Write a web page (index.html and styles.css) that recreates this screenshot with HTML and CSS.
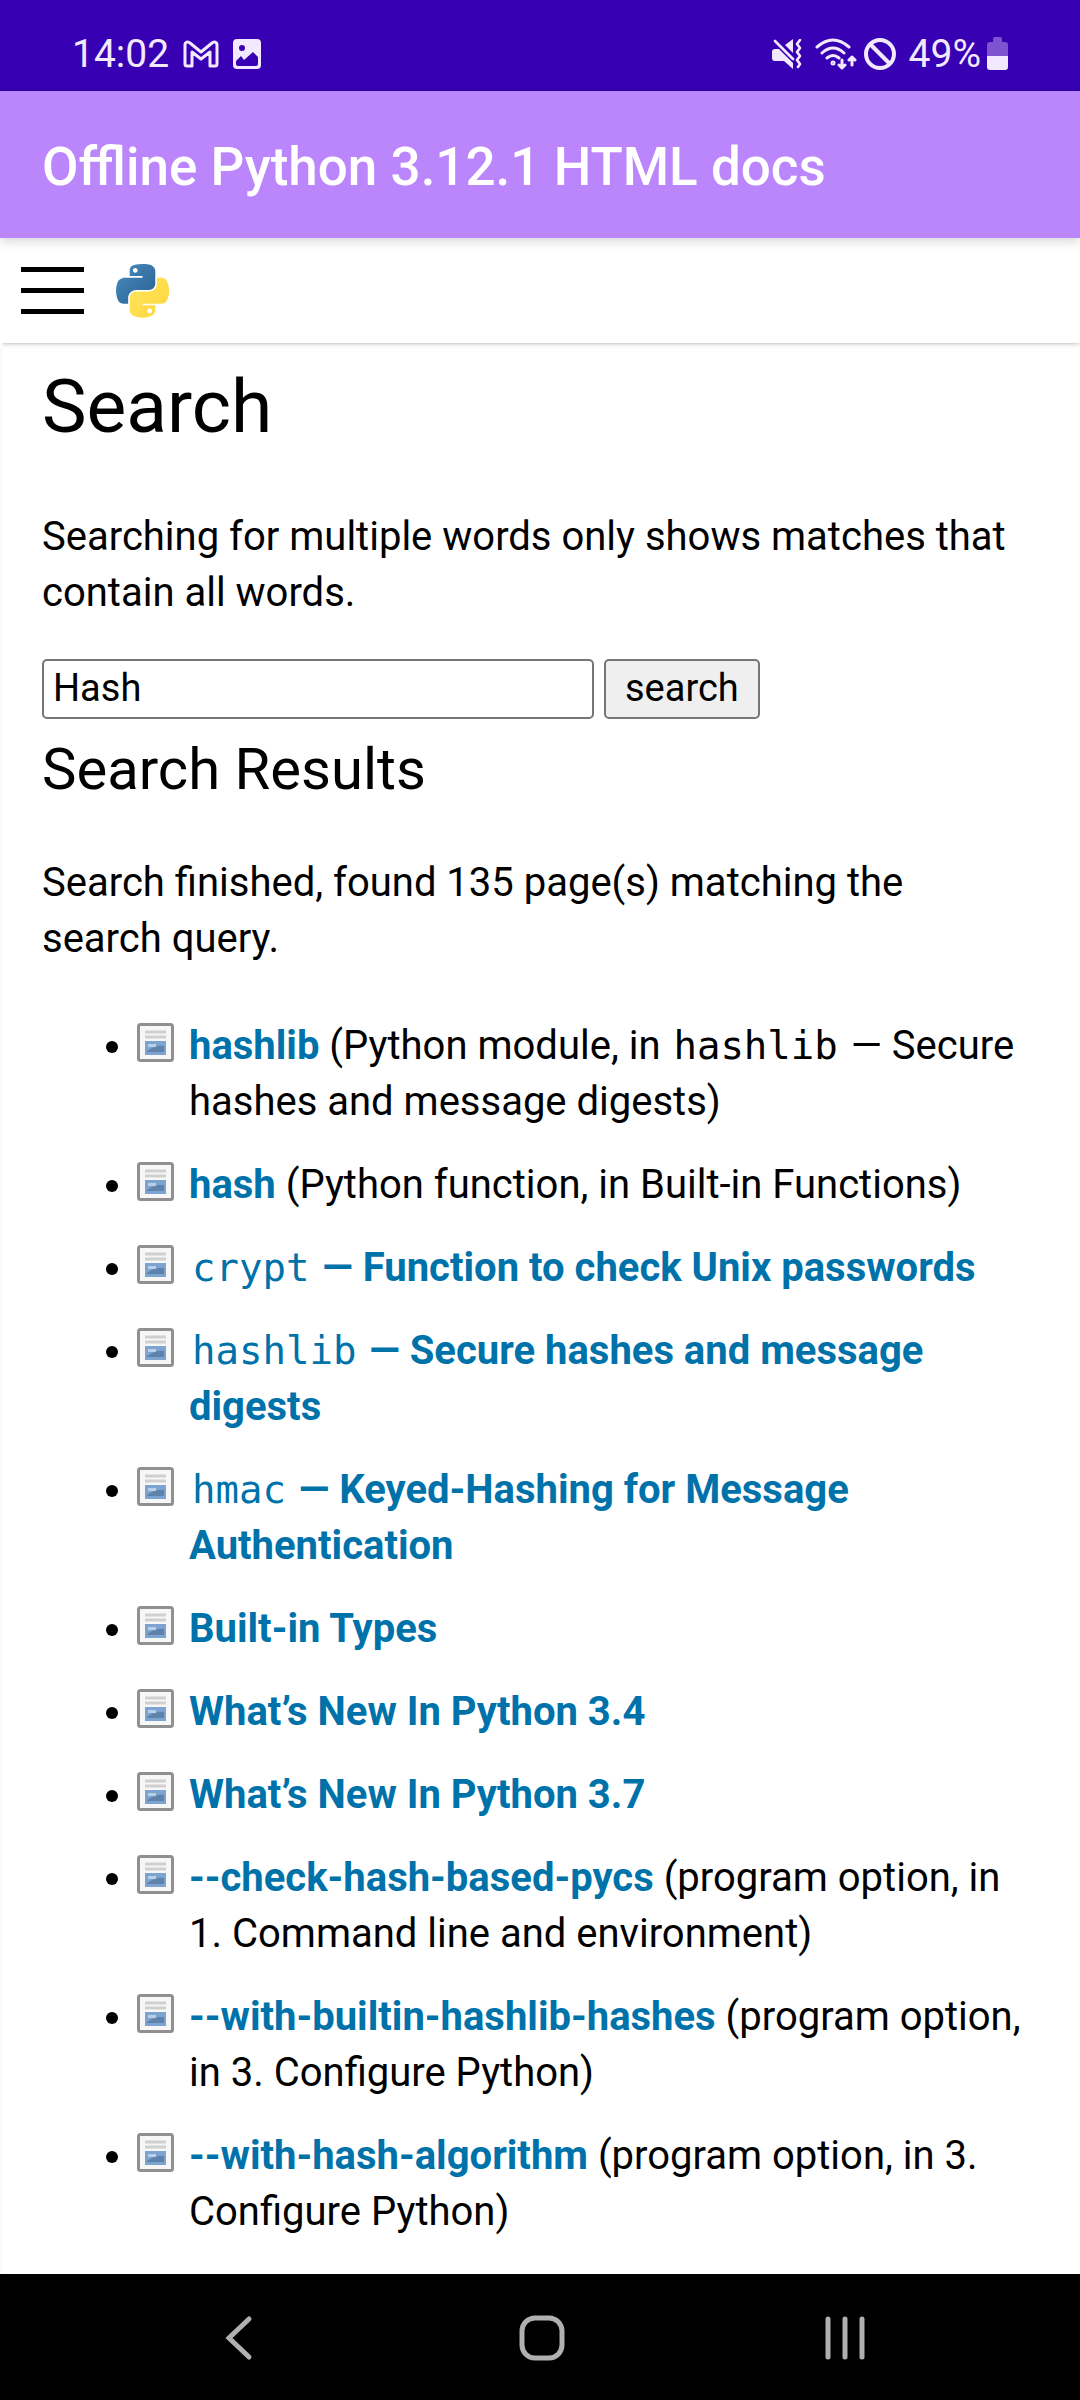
FILE: index.html
```html
<!DOCTYPE html>
<html lang="en">
<head>
    <meta charset="UTF-8">
    <meta name="viewport" content="width=device-width, initial-scale=1.0">
    <title>Search - Offline Python 3.12.1 HTML docs</title>
    <link rel="stylesheet" href="styles.css">
</head>
<body>
    <div class="status-bar">
        <div class="status-left">
            <span>14:02</span>
            <svg class="gmail" width="36" height="28" viewBox="0 0 36 28" fill="none" stroke="#f3e9ff" stroke-width="3" stroke-linejoin="round">
                <path d="M2 5v19q0 2 2 2h5V12l9 7 9-7v14h5q2 0 2-2V5c0-3-3-4-5-2l-11 9L7 3C5 1 2 2 2 5z"/>
            </svg>
            <svg width="28" height="30" viewBox="0 0 28 30">
                <path fill="#f3e9ff" fill-rule="evenodd" d="M4 0h20q4 0 4 4v22q0 4-4 4H4q-4 0-4-4V4q0-4 4-4zM3 22v3q0 2 2 2h18q2 0 2-2v-7l-5-5-9 8-3-4zM9 6a3 3 0 1 0 0 6 3 3 0 0 0 0-6z"/>
            </svg>
        </div>
        <div class="status-right">
            <svg width="30" height="30" viewBox="0 0 30 30" fill="#f3e9ff" stroke="#f3e9ff">
                <path stroke="none" d="M0 13q0-3 3-3h4l14 14v6l-9-8H3q-3 0-3-3zM13 6l8-6v14z"/>
                <path fill="none" stroke-width="2.6" stroke-linecap="round" stroke-linejoin="round" d="M3 2l18 18M28 1l-3 4 3 4-3 4 3 4-3 4 3 4-2 3"/>
            </svg>
            <svg class="wifi" width="42" height="32" viewBox="0 0 42 32" fill="none" stroke="#f3e9ff" stroke-width="3" stroke-linecap="round" stroke-linejoin="round">
                <path d="M2 9q16-14 32 0M7 15q11-10 22 0M12 20q6-5 12 0M27 22v8m-3-3l3 3 3-3M37 27v-8m-3 3l3-3 3 3"/>
                <circle cx="18" cy="25" r="1"/>
            </svg>
            <svg class="blocked" width="34" height="34" viewBox="0 0 34 34" fill="none" stroke="#f3e9ff" stroke-width="4">
                <circle cx="17" cy="17" r="14"/>
                <path d="M7 7l20 20"/>
            </svg>
            <span>49%</span>
            <svg class="battery" width="21" height="33" viewBox="0 0 21 33">
                <path fill="#7f52cf" d="M0 19V8q0-3 3-3h3V2q0-2 2-2h5q2 0 2 2v3h3q3 0 3 3v11z"/>
                <path fill="#f3e9ff" d="M0 19h21v11q0 3-3 3H3q-3 0-3-3z"/>
            </svg>
        </div>
    </div>

    <header class="app-bar">
        <span class="app-title">Offline Python 3.12.1 HTML docs</span>
    </header>

    <nav class="top-nav">
        <button type="button" class="menu-button" aria-label="Menu">
            <span></span>
            <span></span>
            <span></span>
        </button>
        <a href="#" class="logo" aria-label="Python">
            <svg width="53" height="54" viewBox="0 0 111 113">
                <defs>
                    <linearGradient id="blue" x1="0" y1="0" x2="1" y2="1">
                        <stop offset="0" stop-color="#4a8cc0"/>
                        <stop offset="1" stop-color="#28608f"/>
                    </linearGradient>
                    <linearGradient id="yellow" x1="1" y1="1" x2="0.3" y2="0.3">
                        <stop offset="0" stop-color="#ffd43b"/>
                        <stop offset="1" stop-color="#ffe155"/>
                    </linearGradient>
                </defs>
                <path fill="url(#blue)" d="M54.9 0c-4.6 0-9 .4-12.8 1.1C30.8 3.1 28.7 7.3 28.7 15v10.2h26.8v3.4H18.6c-7.8 0-14.6 4.7-16.7 13.6-2.5 10.2-2.6 16.6 0 27.3 1.9 7.9 6.4 13.6 14.2 13.6h9.3V70.8c0-8.8 7.6-16.6 16.7-16.6h26.8c7.4 0 13.4-6.1 13.4-13.6V15c0-7.3-6.1-12.7-13.4-13.9C64.3.3 59.5 0 54.9 0zM40.4 8.2c2.8 0 5 2.3 5 5.1s-2.2 5.1-5 5.1-5-2.3-5-5.1 2.2-5.1 5-5.1z"/>
                <path fill="url(#yellow)" d="M85.6 28.7v11.9c0 9.2-7.8 17-16.7 17H42.1c-7.3 0-13.4 6.3-13.4 13.6v25.5c0 7.3 6.3 11.5 13.4 13.6 8.5 2.5 16.6 2.9 26.8 0 6.7-2 13.4-5.9 13.4-13.6V86.5H55.5v-3.4h40.2c7.8 0 10.7-5.4 13.4-13.6 2.8-8.4 2.7-16.5 0-27.3-1.9-7.7-5.6-13.5-13.4-13.5zM70.6 93.3c2.8 0 5 2.3 5 5.1s-2.2 5.1-5 5.1-5-2.3-5-5.1 2.2-5.1 5-5.1z"/>
            </svg>
        </a>
    </nav>

    <main class="content">
        <h1>Search</h1>
        <p class="hint">Searching for multiple words only shows matches that contain all words.</p>
        <form class="search-form">
            <input type="text" name="q" value="Hash" aria-label="Search">
            <button type="submit">search</button>
        </form>
        <h2>Search Results</h2>
        <p class="summary">Search finished, found 135 page(s) matching the search query.</p>
        <ul class="results">
            <li><a href="#">hashlib</a> (Python module, in <code>hashlib</code> — Secure hashes and message digests)</li>
            <li><a href="#">hash</a> (Python function, in Built-in Functions)</li>
            <li><a href="#"><code>crypt</code> — Function to check Unix passwords</a></li>
            <li><a href="#"><code>hashlib</code> — Secure hashes and message digests</a></li>
            <li><a href="#"><code>hmac</code> — Keyed-Hashing for Message Authentication</a></li>
            <li><a href="#">Built-in Types</a></li>
            <li><a href="#">What’s New In Python 3.4</a></li>
            <li><a href="#">What’s New In Python 3.7</a></li>
            <li><a href="#">--check-hash-based-pycs</a> (program option, in 1. Command line and environment)</li>
            <li><a href="#">--with-builtin-hashlib-hashes</a> (program option, in 3. Configure Python)</li>
            <li><a href="#">--with-hash-algorithm</a> (program option, in 3. Configure Python)</li>
        </ul>
    </main>

    <footer class="system-nav">
        <button type="button" aria-label="Back">
            <svg width="48" height="48" viewBox="0 0 48 48"><path d="M34 5L14 24l20 19"/></svg>
        </button>
        <button type="button" aria-label="Home">
            <svg width="48" height="48" viewBox="0 0 48 48"><rect x="4" y="4" width="40" height="40" rx="13"/></svg>
        </button>
        <button type="button" aria-label="Recents">
            <svg width="48" height="48" viewBox="0 0 48 48"><path d="M7 5v38M24 5v38M41 5v38"/></svg>
        </button>
    </footer>
</body>
</html>
```
FILE: styles.css
```css
* {
    box-sizing: border-box;
}

body {
    margin: 0;
    min-height: 100vh;
    display: flex;
    flex-direction: column;
    font-family: Roboto, 'Liberation Sans', sans-serif;
    font-size: 40px;
    line-height: 56px;
    color: #000;
    background: #fff;
}

button {
    font: inherit;
    color: inherit;
    cursor: pointer;
}

/* android status bar */
.status-bar {
    display: flex;
    justify-content: space-between;
    align-items: center;
    height: 91px;
    padding: 16px 72px 0;
    background: #3700b3;
    color: #f3e9ff;
    font-size: 39px;
}

.status-left,
.status-right {
    display: flex;
    align-items: center;
}

.gmail {
    margin: 0 14px;
}

.wifi {
    margin-left: 13px;
}

.blocked {
    margin: 0 12px 0 6px;
}

.battery {
    margin-left: 6px;
}

.app-bar {
    position: relative;
    z-index: 1;
    padding: 46px 42px 41px;
    background: #bb86fc;
    box-shadow: 0 2px 12px rgba(0, 0, 0, 0.2);
}

.app-title {
    display: block;
    color: #fff;
    font-size: 53px;
    font-weight: 500;
    line-height: 60px;
}

.top-nav {
    display: flex;
    align-items: center;
    gap: 32px;
    height: 105px;
    padding: 0 21px;
    box-shadow: 0 0 5px rgba(0, 0, 0, 0.35);
}

.menu-button {
    display: flex;
    flex-direction: column;
    gap: 16px;
    width: 63px;
    padding: 0;
    border: none;
    background: none;
}

.menu-button span {
    height: 5px;
    background: #000;
}

.logo {
    display: flex;
}

.content {
    flex: 1;
    padding: 19px 52px 0 39px;
    border-left: 3px solid #fbfbfb;
}

h1,
h2 {
    margin: 0;
    font-weight: 400;
}

h1 {
    font-size: 75px;
    line-height: 88px;
}

h2 {
    margin-top: 18px;
    font-size: 58px;
    line-height: 64px;
}

.hint {
    margin: 59px 0 38px;
}

.summary {
    margin: 54px 0 51px;
}

.search-form {
    display: flex;
    gap: 10px;
}

.search-form input,
.search-form button {
    height: 60px;
    border: 2px solid #767676;
    border-radius: 5px;
    font-size: 38px;
    line-height: 48px;
}

.search-form input {
    width: 552px;
    padding: 0 9px 2px;
    font-family: inherit;
    background: #fff;
}

.search-form button {
    padding: 0 19px 2px;
    background: #efefef;
}

.results {
    margin: 0;
    padding-left: 95px;
}

/* page icon sits between the bullet and the text */
.results li {
    margin-bottom: 27px;
    padding-left: 52px;
    background: url("data:image/svg+xml,%3Csvg xmlns='http://www.w3.org/2000/svg' width='38' height='40'%3E%3Crect x='1.5' y='1.5' width='34' height='36' rx='2' fill='%23f7f7f7' stroke='%23909090' stroke-width='3'/%3E%3Cpath d='M8 9h21M8 14h21' stroke='%23d0d0d0' stroke-width='3'/%3E%3Crect x='8' y='18' width='21' height='14' fill='%237da3d0'/%3E%3Cpath d='M10 28q9-6 17-5v6H10z' fill='%235e82aa'/%3E%3Cpath d='M11 21h8v3h-8z' fill='%23b9cfe6'/%3E%3C/svg%3E") 0 5px no-repeat;
}

.results a {
    color: #0072aa;
    font-weight: 700;
    text-decoration: none;
}

.results a:hover {
    text-decoration: underline;
}

code {
    padding: 0 3px;
    font-family: 'DejaVu Sans Mono', monospace;
    font-size: 39px;
    font-weight: 400;
    line-height: 1;
}

.system-nav {
    display: flex;
    justify-content: center;
    gap: 255px;
    padding: 40px 0 38px 3px;
    background: #000;
}

.system-nav button {
    display: flex;
    padding: 0;
    border: none;
    background: none;
}

.system-nav svg {
    fill: none;
    stroke: #b0b0b0;
    stroke-width: 5;
    stroke-linecap: round;
}
```
